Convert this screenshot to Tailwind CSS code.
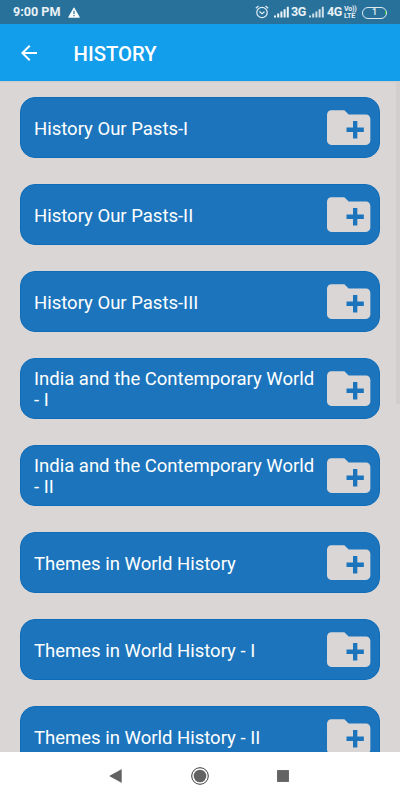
<!DOCTYPE html>
<html lang="en">
<head>
<meta charset="utf-8">
<title>History</title>
<script src="https://cdn.jsdelivr.net/npm/@tailwindcss/browser@4"></script>
</head>
<body class="w-[400px] h-[800px] overflow-hidden flex flex-col bg-[#dad6d5] font-['Roboto',sans-serif] text-white">
<svg class="hidden">
  <symbol id="folder" viewBox="0.15 0.2 24 24"><path fill="#dad6d5" d="M20 6h-8l-2-2H4c-1.11 0-1.99.89-1.99 2L2 18c0 1.11.89 2 2 2h16c1.11 0 2-.89 2-2V8c0-1.11-.89-2-2-2zm-1 8h-3v3h-2v-3h-3v-2h3V9h2v3h3v2z"/></symbol>
  <symbol id="signal" viewBox="0 0 15 12">
    <path fill="#fff" fill-opacity=".92" d="M0 9.500h2V11.500H0zM3.200 7.500h2V11.500h-2zM6.400 5.500h2V11.500h-2zM9.600 3.300h2V11.500h-2zM12.800 .8h2V11.500h-2z"/>
  </symbol>
</svg>
<header class="shrink-0">
  <div class="h-6 bg-[#27719b] flex items-center px-[13px] text-white/90">
    <span class="text-[12.600px] font-bold leading-none w-[54.500px] whitespace-nowrap pt-px">9:00 PM</span>
    <svg class="w-3 h-[11px]" viewBox="0 0 12 11"><path fill="#fff" stroke="#fff" stroke-linejoin="round" stroke-width=".8" d="M6 .8 11.400 10.300H.6z"/><path fill="#27719b" d="M5.400 3.800h1.200v3.200H5.400zM5.400 8h1.200v1.200H5.400z"/></svg>
    <div class="ml-auto flex items-center">
      <svg class="w-[14px] h-[14px] mr-[5px]" viewBox="0 0 14 14" fill="none" stroke="#e4eef4" stroke-width="1.200"><circle cx="7" cy="7.500" r="5.200"/><path d="M.8 3.300 3.500 1M13.200 3.300 10.500 1M4.500 6.500 7 8.700l2.500-2"/></svg>
      <svg class="w-[15px] h-3 mr-[2px]"><use href="#signal"/></svg>
      <span class="text-[12.500px] font-bold leading-none w-[18px] whitespace-nowrap pt-px tracking-[-0.5px]">3G</span>
      <svg class="w-[15px] h-3 mr-[3px] opacity-85"><use href="#signal"/></svg>
      <span class="text-[12.500px] font-bold leading-none w-[17px] whitespace-nowrap pt-px tracking-[-0.5px]">4G</span>
      <span class="text-[7px] font-bold leading-[6.500px] w-[13px] mr-[5px] pt-px"><span class="block whitespace-nowrap tracking-[-0.2px]">Vo))</span><span class="block">LTE</span></span>
      <span class="w-[25px] h-[12px] mt-px rounded-full border border-white/85 text-[9px] leading-none font-medium flex items-center justify-center relative">1<span class="absolute right-0 top-[3px] w-px h-[3px] bg-[#35c52f]"></span></span>
    </div>
  </div>
  <div class="h-[57px] bg-[#139eeb] flex items-center pl-[16.500px]">
    <svg class="w-6 h-6" viewBox="0 0 24 24"><path fill="#fff" d="M20 11H7.830l5.590-5.590L12 4l-8 8 8 8 1.410-1.410L7.830 13H20v-2z"/></svg>
    <h1 class="ml-[33px] text-[20.300px] font-medium leading-none pt-[4px]">HISTORY</h1>
  </div>
</header>
<main class="flex-1 min-h-0 overflow-hidden relative pt-4 px-5 border-t border-[#cbcccd] -mb-px">
  <span class="absolute right-0 top-0 w-1 h-[322px] bg-[#d2cecd]"></span>
  <ul class="flex flex-col gap-[26px] -mt-px text-[18.500px] leading-[21px]">
    <li class="h-[61px] rounded-[15px] bg-[#1c75bc] border border-[#0e6cb9] flex items-center pl-[13px] pr-1"><span class="flex-1 pt-[4px]">History Our Pasts-I</span><svg class="w-[52px] h-[52px] shrink-0"><use href="#folder"/></svg></li>
    <li class="h-[61px] rounded-[15px] bg-[#1c75bc] border border-[#0e6cb9] flex items-center pl-[13px] pr-1"><span class="flex-1 pt-[4px]">History Our Pasts-II</span><svg class="w-[52px] h-[52px] shrink-0"><use href="#folder"/></svg></li>
    <li class="h-[61px] rounded-[15px] bg-[#1c75bc] border border-[#0e6cb9] flex items-center pl-[13px] pr-1"><span class="flex-1 pt-[4px]">History Our Pasts-III</span><svg class="w-[52px] h-[52px] shrink-0"><use href="#folder"/></svg></li>
    <li class="h-[61px] rounded-[15px] bg-[#1c75bc] border border-[#0e6cb9] flex items-center pl-[13px] pr-1"><span class="flex-1 pt-[2px] whitespace-nowrap">India and the Contemporary World<br>- I</span><svg class="w-[52px] h-[52px] shrink-0"><use href="#folder"/></svg></li>
    <li class="h-[61px] rounded-[15px] bg-[#1c75bc] border border-[#0e6cb9] flex items-center pl-[13px] pr-1"><span class="flex-1 pt-[2px] whitespace-nowrap">India and the Contemporary World<br>- II</span><svg class="w-[52px] h-[52px] shrink-0"><use href="#folder"/></svg></li>
    <li class="h-[61px] rounded-[15px] bg-[#1c75bc] border border-[#0e6cb9] flex items-center pl-[13px] pr-1"><span class="flex-1 pt-[4px]">Themes in World History</span><svg class="w-[52px] h-[52px] shrink-0"><use href="#folder"/></svg></li>
    <li class="h-[61px] rounded-[15px] bg-[#1c75bc] border border-[#0e6cb9] flex items-center pl-[13px] pr-1"><span class="flex-1 pt-[4px]">Themes in World History - I</span><svg class="w-[52px] h-[52px] shrink-0"><use href="#folder"/></svg></li>
    <li class="h-[61px] rounded-[15px] bg-[#1c75bc] border border-[#0e6cb9] flex items-center pl-[13px] pr-1"><span class="flex-1 pt-[4px]">Themes in World History - II</span><svg class="w-[52px] h-[52px] shrink-0"><use href="#folder"/></svg></li>
  </ul>
</main>
<nav class="relative h-12 shrink-0 bg-white flex items-center justify-between pl-[109px] pr-[111px]">
  <svg class="w-[13px] h-[14px]" viewBox="0 0 13 14"><path fill="#636363" stroke="#4b4b4b" stroke-width=".6" d="M.8 7 12.300 .7v12.600z"/></svg>
  <svg class="w-[18px] h-[18px] ml-[1px]" viewBox="0 0 18 18"><circle cx="9" cy="9" r="8.300" fill="none" stroke="#3e3e3e" stroke-width="1"/><circle cx="9" cy="9" r="6.300" fill="#636363"/></svg>
  <svg class="w-3 h-3" viewBox="0 0 12 12"><path fill="#636363" stroke="#4b4b4b" stroke-width=".7" d="M.4 .4h11.200v11.200H.4z"/></svg>
</nav>
</body>
</html>
